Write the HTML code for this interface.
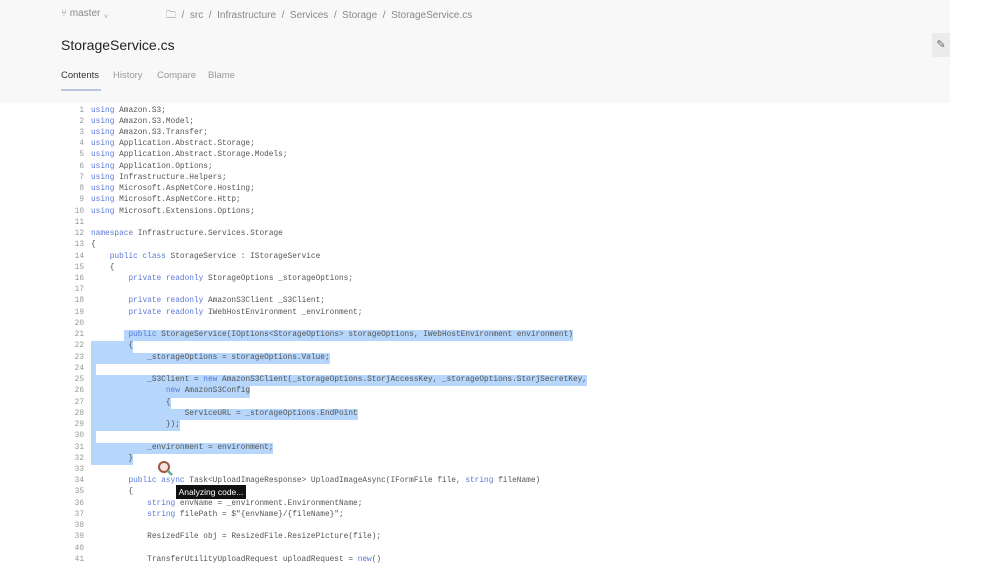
<!DOCTYPE html>
<html><head><meta charset="utf-8"><style>
body{margin:0;width:1000px;height:563px;overflow:hidden;background:#fff;font-family:"Liberation Sans",sans-serif;position:relative}
.top{position:absolute;left:0;top:0;width:950px;height:103px;background:#f8f8f8}
.bc{position:absolute;top:8px;font-size:10px;color:#888}
h1{position:absolute;left:61px;top:37px;margin:0;font-size:14px;font-weight:normal;color:#222}
.tab{position:absolute;top:70px;font-size:9.5px;color:#999}
pre{position:absolute;left:62px;top:105.5px;margin:0;font-family:"Liberation Mono",monospace;font-size:7.8px;line-height:11.23px;color:#555}
.n{display:inline-block;width:22px;text-align:right;color:#999;margin-right:7px}
.k{color:#5a7ad8}
.s{background:#b6d6fb;display:inline-block;height:11.23px;vertical-align:top}
</style></head><body>
<div class="top"></div>
<div class="bc" style="left:61px">⑂ master ⌄</div>
<div class="bc" style="left:166px">🗀 &nbsp;/ &nbsp;src &nbsp;/ &nbsp;Infrastructure &nbsp;/ &nbsp;Services &nbsp;/ &nbsp;Storage &nbsp;/ &nbsp;StorageService.cs</div>
<h1>StorageService.cs</h1>
<div class="tab" style="left:61px;color:#333">Contents</div>
<div style="position:absolute;left:61px;top:89px;width:40px;height:2px;background:#b8c8e4"></div>
<div class="tab" style="left:113px">History</div>
<div class="tab" style="left:157px">Compare</div>
<div class="tab" style="left:208px">Blame</div>
<div style="position:absolute;left:932px;top:33px;width:18px;height:24px;background:#ebebeb;color:#666;font-size:11px;line-height:24px;text-align:center">✎</div>
<pre><span class="n">1</span><span class="k">using</span> Amazon.S3;
<span class="n">2</span><span class="k">using</span> Amazon.S3.Model;
<span class="n">3</span><span class="k">using</span> Amazon.S3.Transfer;
<span class="n">4</span><span class="k">using</span> Application.Abstract.Storage;
<span class="n">5</span><span class="k">using</span> Application.Abstract.Storage.Models;
<span class="n">6</span><span class="k">using</span> Application.Options;
<span class="n">7</span><span class="k">using</span> Infrastructure.Helpers;
<span class="n">8</span><span class="k">using</span> Microsoft.AspNetCore.Hosting;
<span class="n">9</span><span class="k">using</span> Microsoft.AspNetCore.Http;
<span class="n">10</span><span class="k">using</span> Microsoft.Extensions.Options;
<span class="n">11</span>
<span class="n">12</span><span class="k">namespace</span> Infrastructure.Services.Storage
<span class="n">13</span>{
<span class="n">14</span>    <span class="k">public class</span> StorageService : IStorageService
<span class="n">15</span>    {
<span class="n">16</span>        <span class="k">private readonly</span> StorageOptions _storageOptions;
<span class="n">17</span>
<span class="n">18</span>        <span class="k">private readonly</span> AmazonS3Client _S3Client;
<span class="n">19</span>        <span class="k">private readonly</span> IWebHostEnvironment _environment;
<span class="n">20</span>
<span class="n">21</span>       <span class="s"> <span class="k">public</span> StorageService(IOptions&lt;StorageOptions&gt; storageOptions, IWebHostEnvironment environment)</span>
<span class="n">22</span><span class="s">        {</span>
<span class="n">23</span><span class="s">            _storageOptions = storageOptions.Value;</span>
<span class="n">24</span><span class="s"> </span>
<span class="n">25</span><span class="s">            _S3Client = <span class="k">new</span> AmazonS3Client(_storageOptions.StorjAccessKey, _storageOptions.StorjSecretKey,</span>
<span class="n">26</span><span class="s">                <span class="k">new</span> AmazonS3Config</span>
<span class="n">27</span><span class="s">                {</span>
<span class="n">28</span><span class="s">                    ServiceURL = _storageOptions.EndPoint</span>
<span class="n">29</span><span class="s">                });</span>
<span class="n">30</span><span class="s"> </span>
<span class="n">31</span><span class="s">            _environment = environment;</span>
<span class="n">32</span><span class="s">        }</span>
<span class="n">33</span>
<span class="n">34</span>        <span class="k">public async</span> Task&lt;UploadImageResponse&gt; UploadImageAsync(IFormFile file, <span class="k">string</span> fileName)
<span class="n">35</span>        {
<span class="n">36</span>            <span class="k">string</span> envName = _environment.EnvironmentName;
<span class="n">37</span>            <span class="k">string</span> filePath = $"{envName}/{fileName}";
<span class="n">38</span>
<span class="n">39</span>            ResizedFile obj = ResizedFile.ResizePicture(file);
<span class="n">40</span>
<span class="n">41</span>            TransferUtilityUploadRequest uploadRequest = <span class="k">new</span>()
</pre>
<svg style="position:absolute;left:156px;top:460px" width="20" height="18"><circle cx="8" cy="7" r="5" fill="#f3e6e0" stroke="#a0553a" stroke-width="2"/><line x1="11.5" y1="10.5" x2="16" y2="15" stroke="#6a9" stroke-width="2.5"/></svg>
<div style="position:absolute;left:176px;top:485px;width:70px;height:14px;background:#111;color:#fff;font-size:8.5px;line-height:14px;text-align:center">Analyzing code...</div>
</body></html>
